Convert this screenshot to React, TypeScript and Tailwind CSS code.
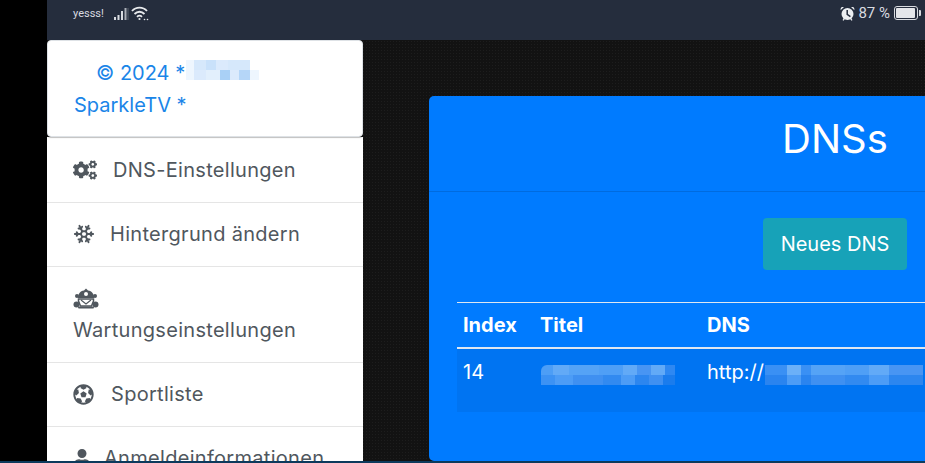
import { FaCogs, FaFutbol, FaUser } from "react-icons/fa";
import { Snowflake } from "lucide-react";

const rowClass = "flex items-center border-b border-[#e5e5e5] px-[26px] pb-[16px] pt-[15px]";

function BlockRow({ cells }: { cells: string[] }) {
  return (
    <span className="flex h-[10px]">
      {cells.map((c, i) => (
        <span key={i} className={c} />
      ))}
    </span>
  );
}

const copyMask = [
  ["h-full w-[8px] bg-[#eef6fe]", "h-full w-[12px] bg-[#d6e8fb]", "h-full w-[10px] bg-[#c9e1fa]", "h-full w-[12px] bg-[#dbeafc]", "h-full w-[22px] bg-[#d6e8fb]"],
  ["h-full w-[8px] bg-[#eef6fe]", "h-full w-[12px] bg-[#dbeafc]", "h-full w-[14px] bg-[#e2effc]", "h-full w-[10px] bg-[#a9d0f6]", "h-full w-[9px] bg-[#dbeafc]", "h-full w-[11px] bg-[#b5d6f8]", "h-full w-[9px] bg-[#eef6fe]"],
];

const titleMask = [
  ["h-full w-[12px] bg-[#4d9ef6]", "h-full w-[16px] bg-[#62aaf7]", "h-full w-[30px] bg-[#55a3f6]", "h-full w-[24px] bg-[#4f9ff6]", "h-full w-[14px] bg-[#62aaf7]", "h-full w-[14px] bg-[#4895f3]", "h-full w-[14px] bg-[#62aaf7]", "h-full w-[10px] bg-[#2e88f2]"],
  ["h-full w-[14px] bg-[#3c92f4]", "h-full w-[18px] bg-[#4c9cf6]", "h-full w-[30px] bg-[#3f90f1]", "h-full w-[18px] bg-[#328af0]", "h-full w-[14px] bg-[#4c9cf6]", "h-full w-[14px] bg-[#2c86ef]", "h-full w-[14px] bg-[#3f90f1]", "h-full w-[12px] bg-[#1a7ced]"],
];

const dnsMask = [
  ["h-full w-[22px] bg-[#3a90f4]", "h-full w-[14px] bg-[#6bb0f8]", "h-full w-[10px] bg-[#3a90f4]", "h-full w-[34px] bg-[#55a3f6]", "h-full w-[24px] bg-[#4f9ff6]", "h-full w-[20px] bg-[#62aaf7]", "h-full w-[34px] bg-[#4895f3]"],
  ["h-full w-[22px] bg-[#2a84ef]", "h-full w-[14px] bg-[#4c9cf6]", "h-full w-[10px] bg-[#2a84ef]", "h-full w-[34px] bg-[#3f90f1]", "h-full w-[24px] bg-[#328af0]", "h-full w-[20px] bg-[#4c9cf6]", "h-full w-[34px] bg-[#2c86ef]"],
];

export default function App() {
  return (
    <div className="flex h-[463px] w-[925px] flex-col overflow-hidden bg-black font-['Inter','Noto_Sans',sans-serif]">
      <div className="flex min-h-0 flex-1">
        <div className="w-[47px] shrink-0" />
        <div className="flex min-w-0 flex-1 flex-col">
          <div className="flex h-[40px] shrink-0 items-start justify-between bg-[#252d3d] pl-[26px] pr-[7px] pt-[5px] text-[#d8dbe0]">
            <div className="mt-px flex items-center font-['Roboto',sans-serif] text-[11px] leading-[16px]">
              <span>yesss!</span>
              <svg className="ml-[9px]" width="16" height="14" viewBox="0 0 16 14" fill="currentColor">
                <rect x="1" y="10" width="2" height="3" />
                <rect x="4.5" y="8" width="2" height="5" />
                <rect x="8" y="4" width="2" height="9" />
                <rect x="11.5" y="1" width="2" height="12" opacity="0.75" />
                <rect x="14.5" y="1" width="1" height="12" opacity="0.3" />
              </svg>
              <svg className="ml-[2px] -mt-[2px]" width="18" height="15" viewBox="0 0 18 15" fill="none" stroke="#e8eaed" strokeWidth="1.8">
                <path d="M1 5 C5 0.5 12 0.5 16 5" />
                <path d="M3.5 8 C6.5 5 10.5 5 13.5 8" />
                <path d="M6 10.8 C7.5 9.4 9.5 9.4 11 10.8" />
                <circle cx="8.5" cy="13" r="1.1" fill="#e8eaed" stroke="none" />
                <circle cx="13.5" cy="13.5" r="0.8" fill="#e8eaed" stroke="none" />
                <circle cx="16.5" cy="13.5" r="0.8" fill="#e8eaed" stroke="none" />
              </svg>
            </div>
            <div className="flex items-center font-['Roboto',sans-serif] text-[15px] leading-[16px]">
              <svg width="15" height="15" viewBox="0 0 15 15">
                <circle cx="7.5" cy="8" r="6" fill="#eceef1" />
                <path d="M0.6 4.2 L4 1 L1.8 0.9 Q0.3 1.6 0.6 4.2 Z M14.4 4.2 L11 1 L13.2 0.9 Q14.7 1.6 14.4 4.2 Z" fill="#eceef1" />
                <path d="M3 14.4 L4.4 12.6 M12 14.4 L10.6 12.6" stroke="#eceef1" strokeWidth="1.3" />
                <path d="M7.2 4 V8.4 L10.4 10.6" fill="none" stroke="#252d3d" strokeWidth="1.5" />
              </svg>
              <span className="ml-[3px]">87 %</span>
              <span className="relative ml-[4px] flex h-[14px] w-[24px] items-center rounded-[3px] border border-[#d8dbe0] p-[1px]">
                <span className="h-full w-[19px] rounded-[1px] bg-[#e4e6ea]" />
                <span className="absolute -right-[4px] h-[6px] w-[2px] rounded-r-[1px] bg-[#d8dbe0]" />
              </span>
            </div>
          </div>

          <div className="flex min-h-0 flex-1 bg-[#121212] bg-[radial-gradient(#1d1d1d_1px,transparent_1px)] bg-[length:3px_3px]">
            <div className="flex w-[316px] shrink-0 flex-col overflow-hidden text-[20px] leading-[32px] text-[#50575e]">
              <div className="relative z-10 rounded-[4px] border border-[#dee2e6] bg-white pb-[15px] pl-[26px] pr-[20px] pt-[16px] text-[#1a85e8] shadow-[0_1px_1px_rgba(0,0,0,0.25)]">
                <div className="pl-[22px]">© 2024 *</div>
                <div>SparkleTV *</div>
                <div className="absolute left-[138px] top-[19px] block">
                  {copyMask.map((cells, i) => (
                    <BlockRow key={i} cells={cells} />
                  ))}
                </div>
              </div>
              <div className="flex-1 overflow-hidden bg-white pt-[2px] tracking-[0.3px]">
                <div className={rowClass}>
                  <FaCogs className="text-[24px]" />
                  <span className="ml-[16px]">DNS-Einstellungen</span>
                </div>
                <div className={rowClass}>
                  <Snowflake size={22} strokeWidth={2} />
                  <span className="ml-[15px]">Hintergrund ändern</span>
                </div>
                <div className="border-b border-[#e5e5e5] px-[26px] pb-[16px] pt-[15px]">
                  <div className="flex h-[32px] items-center">
                    <svg width="26" height="21" viewBox="0 0 26 21" fill="currentColor">
                      <path d="M13 0.5 L15 2.5 C19 3 21 6 21 10 L5 10 C5 6 7 3 11 2.5 Z" />
                      <circle cx="13" cy="6" r="2" fill="#fff" />
                      <path d="M5.5 11 H20.5 V13 L18.5 18 H7.5 L5.5 13 Z" fill="none" stroke="currentColor" strokeWidth="1.5" />
                      <path d="M8 12 L13 16 L18 12" fill="none" stroke="currentColor" strokeWidth="1.2" />
                      <circle cx="4" cy="8" r="2" />
                      <circle cx="22" cy="8" r="2" />
                      <circle cx="3.5" cy="16.5" r="3" />
                      <circle cx="22.5" cy="16.5" r="3" />
                      <rect x="5" y="18.5" width="16" height="2" rx="1" />
                    </svg>
                  </div>
                  <div>Wartungseinstellungen</div>
                </div>
                <div className={rowClass}>
                  <FaFutbol className="text-[21px]" />
                  <span className="ml-[17px]">Sportliste</span>
                </div>
                <div className={rowClass}>
                  <FaUser className="text-[18px]" />
                  <span className="ml-[13px]">Anmeldeinformationen</span>
                </div>
              </div>
            </div>

            <div className="ml-[66px] mt-[56px] w-[812px] shrink-0 rounded-[5px] bg-[#007bff] text-center text-[20px] leading-[24px] text-white">
              <div className="h-[96px] border-b border-[rgba(0,0,0,0.125)] pt-[19px] text-[40px] leading-[48px]">DNSs</div>
              <div className="px-[28px] pt-[26px]">
                <button className="h-[52px] w-[144px] rounded-[4px] bg-[#17a2b8] text-[20px]">Neues DNS</button>
                <table className="mt-[32px] w-full table-fixed border-separate border-spacing-0 text-left">
                  <thead>
                    <tr className="font-bold">
                      <th className="h-[47px] w-[78px] border-y border-b-2 border-[#dfe7f1] px-[6px] pb-[1px]">Index</th>
                      <th className="h-[47px] w-[166px] border-y border-b-2 border-[#dfe7f1] pb-[1px] pl-[5px] pr-[7px]">Titel</th>
                      <th className="h-[47px] border-y border-b-2 border-[#dfe7f1] px-[6px] pb-[1px]">DNS</th>
                    </tr>
                  </thead>
                  <tbody>
                    <tr className="h-[63px] bg-[rgba(0,0,0,0.05)] align-top">
                      <td className="px-[6px] pt-[11px]">14</td>
                      <td className="px-[6px] pt-[11px]">
                        <span className="mt-[5px] block overflow-hidden rounded-t-[6px]">
                          {titleMask.map((cells, i) => (
                            <BlockRow key={i} cells={cells} />
                          ))}
                        </span>
                      </td>
                      <td className="px-[6px] pt-[11px]">
                        <span className="flex items-start">
                          http://
                          <span className="ml-[1px] mt-[5px] block">
                            {dnsMask.map((cells, i) => (
                              <BlockRow key={i} cells={cells} />
                            ))}
                          </span>
                        </span>
                      </td>
                    </tr>
                  </tbody>
                </table>
              </div>
            </div>
          </div>
        </div>
      </div>
      <div className="h-[2px] shrink-0 bg-[#0c3a5c]" />
    </div>
  );
}
